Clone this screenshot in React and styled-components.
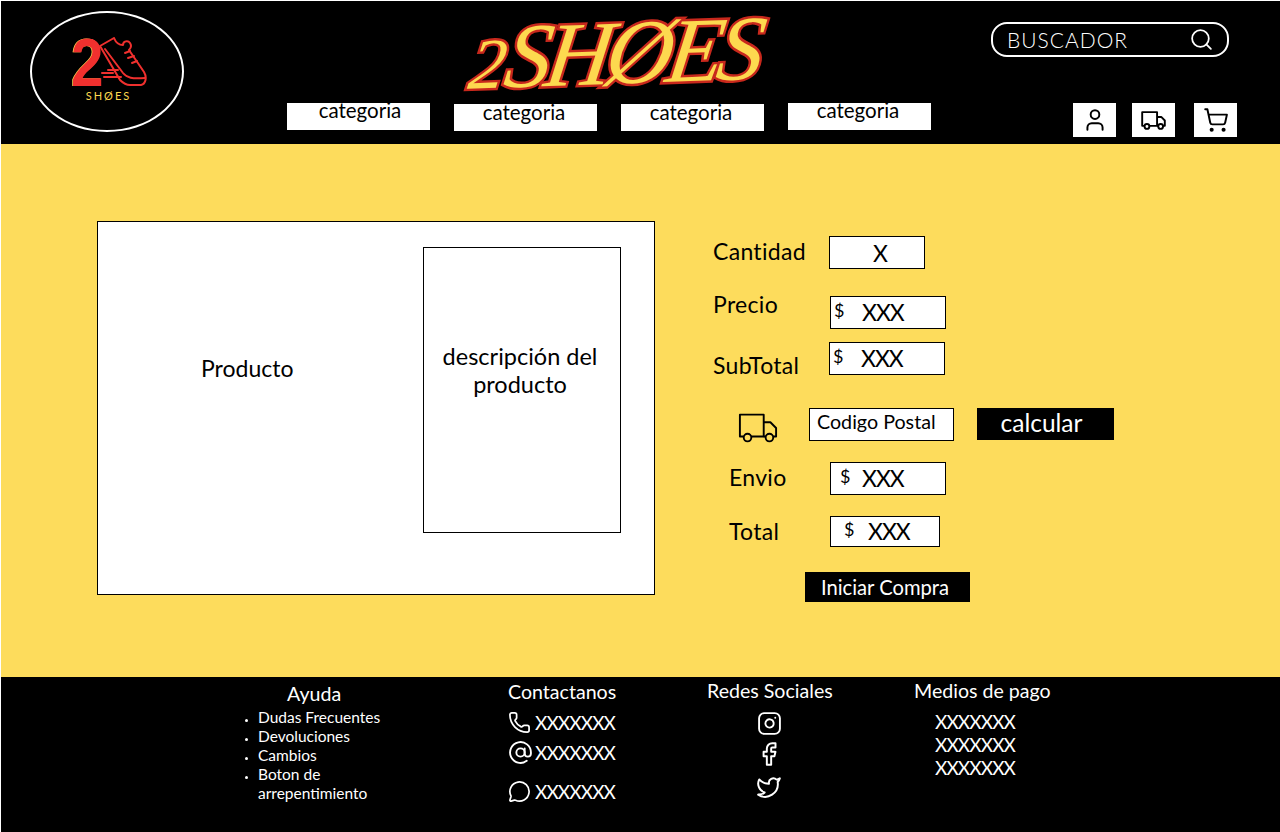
import React from "react";
import styled, { createGlobalStyle } from "styled-components";
import {
  AtSign,
  Facebook,
  Instagram,
  MessageCircle,
  Phone,
  Search,
  ShoppingCart,
  Twitter,
  User,
} from "lucide-react";

const GlobalStyle = createGlobalStyle`
  html, body {
    margin: 0;
    background: #fff;
  }
  body {
    font-family: "Lato", "Noto Sans", sans-serif;
    color: #000;
  }
  * {
    box-sizing: border-box;
  }
`;

const Page = styled.div`
  width: 1280px;
  height: 832px;
  padding: 1px 0 0 1px;
  display: flex;
  flex-direction: column;
  overflow: hidden;
`;

/* header */
const Header = styled.header`
  height: 143px;
  background: #000;
  display: flex;
  flex-shrink: 0;
`;

const LogoBadge = styled.div`
  width: 154px;
  height: 121px;
  margin: 10px 0 0 29px;
  border: 2px solid #fff;
  border-radius: 50%;
  display: flex;
  flex-direction: column;
  align-items: center;
  padding: 24px 0 0 3px;
`;

const LogoMark = styled.div`
  display: flex;
  align-items: flex-end;
  height: 50px;
`;

const LogoTwo = styled.span`
  font-family: "Liberation Sans", sans-serif;
  font-weight: 700;
  font-size: 68px;
  line-height: 50px;
  width: 28px;
  color: #f0302e;
  text-shadow: -1px 0 0 #fdd94f;
  transform: scaleX(0.86);
  transform-origin: left bottom;
`;

const LogoWord = styled.span`
  font-family: "Lato", sans-serif;
  font-weight: 400;
  font-size: 11px;
  line-height: 12px;
  letter-spacing: 2px;
  margin-top: 3px;
  color: #fdd94f;
`;

const CenterColumn = styled.div`
  width: 644px;
  margin-left: 103px;
  display: flex;
  flex-direction: column;
`;

const Wordmark = styled.h1`
  margin: 0;
  height: 102px;
  padding: 3px 0 0 185px;
  font-family: "Liberation Serif", serif;
  font-style: italic;
  font-weight: 400;
  font-size: 92px;
  line-height: 99px;
  letter-spacing: -6px;
  white-space: nowrap;
  color: #fdd94f;
  -webkit-text-stroke: 5px #c8281c;
  paint-order: stroke fill;
  transform: skewX(-10deg) rotate(-2deg);
`;

const WordmarkTwo = styled.span`
  font-size: 72px;
  letter-spacing: -1px;
`;

const CategoryNav = styled.nav`
  display: flex;
  gap: 24px;
`;

const CategoryLink = styled.a`
  width: 143px;
  height: 27px;
  margin-top: ${(p) => p.$top}px;
  padding: ${(p) => p.$top}px ${(p) => (p.$shift < 0 ? 3 : 0)}px 0 ${(p) => (p.$shift > 0 ? 3 : 0)}px;
  background: #fff;
  color: #000;
  font-size: 20.5px;
  line-height: 15px;
  text-align: center;
`;

const RightColumn = styled.div`
  margin-left: 60px;
  display: flex;
  flex-direction: column;
`;

const SearchBox = styled.div`
  width: 238px;
  height: 35px;
  margin-top: 21px;
  padding: 0 13px 0 14px;
  border: 2px solid #fff;
  border-radius: 16px;
  display: flex;
  align-items: center;
  justify-content: space-between;
  color: #fff;
`;

const SearchText = styled.span`
  font-family: "Lato", sans-serif;
  font-weight: 300;
  font-size: 21px;
  letter-spacing: 1px;
`;

const IconBar = styled.div`
  display: flex;
  margin: 46px 0 0 82px;
`;

const IconButton = styled.button`
  width: 43px;
  height: 34px;
  margin-right: ${(p) => p.$gap}px;
  padding: 0;
  border: 0;
  background: #fff;
  color: #000;
  display: flex;
  align-items: center;
  justify-content: center;
`;

/* main */
const Main = styled.main`
  flex: 1;
  background: #fddc5c;
  display: flex;
  padding: 77px 0 0 96px;
`;

const ProductPanel = styled.section`
  width: 558px;
  height: 374px;
  border: 1px solid #000;
  background: #fff;
  display: flex;
  padding: 25px 0 0 0;
`;

const ProductName = styled.div`
  width: 325px;
  height: 135px;
  padding-left: 103px;
  display: flex;
  align-items: flex-end;
  font-size: 23px;
  line-height: 28px;
`;

const DescriptionBox = styled.div`
  width: 198px;
  height: 286px;
  border: 1px solid #000;
  padding: 94px 4px 0 0;
  text-align: center;
  font-size: 23.5px;
  line-height: 28px;
  white-space: nowrap;
`;

const Form = styled.section`
  margin: 15px 0 0 58px;
  display: flex;
  flex-direction: column;
`;

const Row = styled.div`
  display: flex;
  margin-top: ${(p) => p.$top || 0}px;
  padding-left: ${(p) => p.$indent || 0}px;
`;

const Label = styled.span`
  width: ${(p) => p.$width}px;
  height: 28px;
  margin-top: ${(p) => p.$top || 0}px;
  font-size: 23px;
  line-height: 28px;
  letter-spacing: 0.3px;
`;

const ValueBox = styled.div`
  width: ${(p) => p.$width}px;
  height: ${(p) => p.$height || 33}px;
  border: 1px solid #000;
  background: #fff;
  display: flex;
  align-items: center;
  justify-content: ${(p) => (p.$center ? "center" : "flex-start")};
  padding: 0 0 ${(p) => (p.$center ? 0 : 2)}px ${(p) => (p.$center ? 6 : p.$pad)}px;
  font-size: 23px;
  letter-spacing: -1px;
`;

const Currency = styled.span`
  width: ${(p) => p.$width}px;
  font-size: 18px;
  margin-top: -4px;
`;

const FormTruck = styled.svg`
  margin-top: 4px;
`;

const PostalBox = styled.div`
  width: 145px;
  height: 33px;
  margin-left: 31px;
  padding: 0 0 7px 7px;
  border: 1px solid #000;
  background: #fff;
  display: flex;
  align-items: center;
  font-size: 19.7px;
`;

const CalcButton = styled.button`
  width: 137px;
  height: 32px;
  margin-left: 23px;
  padding: 0 8px 10px 0;
  border: 0;
  background: #000;
  color: #fff;
  font-family: inherit;
  font-size: 24.5px;
  text-align: center;
`;

const BuyButton = styled.button`
  width: 165px;
  height: 30px;
  margin: 25px 0 0 92px;
  padding: 0 5px 0 0;
  border: 0;
  background: #000;
  color: #fff;
  font-family: inherit;
  font-size: 20.2px;
`;

/* footer */
const Footer = styled.footer`
  flex: 0 0 155px;
  background: #000;
  color: #fff;
  display: flex;
  padding-left: 241px;
`;

const FooterColumn = styled.div`
  width: ${(p) => p.$width}px;
  padding-top: ${(p) => p.$top}px;
`;

const FooterTitle = styled.h3`
  margin: 0;
  padding-left: ${(p) => p.$indent || 0}px;
  font-weight: 400;
  font-size: 19.6px;
  line-height: 24px;
  white-space: nowrap;
`;

const HelpList = styled.ul`
  margin: 2px 0 0;
  padding: 0 0 0 16px;
  width: 150px;
  font-size: 15.5px;
  line-height: 19px;

  li::marker {
    font-size: 10px;
  }
`;

const ContactRow = styled.div`
  display: flex;
  align-items: center;
  height: 24px;
  gap: ${(p) => p.$gap || 4}px;
  margin-top: ${(p) => p.$top}px;
  font-size: 19px;
  letter-spacing: -0.9px;
`;

const SocialStack = styled.div`
  display: flex;
  flex-direction: column;
  align-items: center;
  width: 124px;
  gap: 5px;
  margin-top: 8px;

  svg:last-child {
    margin-top: 2px;
  }
`;

const PayStack = styled.div`
  margin: 7px 0 0 21px;
  font-size: 19px;
  line-height: 23px;
  letter-spacing: -0.9px;
`;

function ShoeMark() {
  return (
    <svg width="48" height="50" viewBox="0 0 48 50" fill="none" stroke="#f0302e" strokeWidth="2" strokeLinejoin="round" strokeLinecap="round">
      <path d="M1 9 L15 1 C17 6 20 8 24 8 C24 4 29 3 31 6 C33 9 31 12 30 13 L45 35 C48 40 47 47 42 48 L31 48 C27 48 24 46 21 43 L1 9 Z" />
      <path d="M6 12 L24 36 C28 41 33 42 46 41" />
      <path d="M26 16 L31 14 M29 21 L35 19 M33 26 L38 24" />
      <path d="M9 33 L19 33 M3 36 L14 36 M5 40 L22 40" />
    </svg>
  );
}

const truckPaths = (
  <>
    <path d="M6 25 H2 V2 H27 V25 H14" />
    <path d="M27 10 H34 L40 16 V25 H37 M29 25 H27" />
    <circle cx="10" cy="26" r="4" />
    <circle cx="33" cy="26" r="4" />
  </>
);

function Price({ width, height, pad = 3, cur = 28, children }) {
  return (
    <ValueBox $width={width} $height={height} $pad={pad}>
      <Currency $width={cur}>$</Currency>
      {children}
    </ValueBox>
  );
}

export default function App() {
  return (
    <Page>
      <GlobalStyle />
      <Header>
        <LogoBadge>
          <LogoMark>
            <LogoTwo>2</LogoTwo>
            <ShoeMark />
          </LogoMark>
          <LogoWord>SHØES</LogoWord>
        </LogoBadge>
        <CenterColumn>
          <Wordmark>
            <WordmarkTwo>2</WordmarkTwo>SHØES
          </Wordmark>
          <CategoryNav>
            <CategoryLink $top={0} $shift={1}>categoria</CategoryLink>
            <CategoryLink $top={1} $shift={-1}>categoria</CategoryLink>
            <CategoryLink $top={1} $shift={-1}>categoria</CategoryLink>
            <CategoryLink $top={0} $shift={-1}>categoria</CategoryLink>
          </CategoryNav>
        </CenterColumn>
        <RightColumn>
          <SearchBox>
            <SearchText>BUSCADOR</SearchText>
            <Search size={25} strokeWidth={1.7} />
          </SearchBox>
          <IconBar>
            <IconButton $gap={16}>
              <User size={26} strokeWidth={1.8} />
            </IconButton>
            <IconButton $gap={19}>
              <svg width="25" height="21" viewBox="0 0 42 32" fill="none" stroke="currentColor" strokeWidth="3.2" strokeLinejoin="round">
                {truckPaths}
              </svg>
            </IconButton>
            <IconButton $gap={0}>
              <ShoppingCart size={26} strokeWidth={1.8} />
            </IconButton>
          </IconBar>
        </RightColumn>
      </Header>

      <Main>
        <ProductPanel>
          <ProductName>Producto</ProductName>
          <DescriptionBox>
            descripción del
            <br />
            producto
          </DescriptionBox>
        </ProductPanel>
        <Form>
          <Row>
            <Label $width={116} $top={1}>Cantidad</Label>
            <ValueBox $width={96} $center>X</ValueBox>
          </Row>
          <Row $top={27}>
            <Label $width={117} $top={-6}>Precio</Label>
            <Price width={116}>XXX</Price>
          </Row>
          <Row $top={13}>
            <Label $width={116} $top={9}>SubTotal</Label>
            <Price width={116}>XXX</Price>
          </Row>
          <Row $top={29} $indent={25}>
            <FormTruck width="40" height="32" viewBox="0 0 42 32" fill="none" stroke="currentColor" strokeWidth="2" strokeLinejoin="round">
              {truckPaths}
            </FormTruck>
            <PostalBox>Codigo Postal</PostalBox>
            <CalcButton>calcular</CalcButton>
          </Row>
          <Row $top={18} $indent={16}>
            <Label $width={101} $top={1}>Envio</Label>
            <Price width={116} pad={9} cur={22}>XXX</Price>
          </Row>
          <Row $top={21} $indent={16}>
            <Label $width={101} $top={1}>Total</Label>
            <Price width={110} height={31} pad={13} cur={24}>XXX</Price>
          </Row>
          <BuyButton>Iniciar Compra</BuyButton>
        </Form>
      </Main>

      <Footer>
        <FooterColumn $width={266} $top={5}>
          <FooterTitle $indent={45}>Ayuda</FooterTitle>
          <HelpList>
            <li>Dudas Frecuentes</li>
            <li>Devoluciones</li>
            <li>Cambios</li>
            <li>Boton de arrepentimiento</li>
          </HelpList>
        </FooterColumn>
        <FooterColumn $width={199} $top={3}>
          <FooterTitle>Contactanos</FooterTitle>
          <ContactRow $top={6}>
            <Phone size={23} strokeWidth={1.8} />
            XXXXXXX
          </ContactRow>
          <ContactRow $top={6} $gap={2}>
            <AtSign size={25} strokeWidth={1.8} />
            XXXXXXX
          </ContactRow>
          <ContactRow $top={15}>
            <MessageCircle size={23} strokeWidth={1.8} />
            XXXXXXX
          </ContactRow>
        </FooterColumn>
        <FooterColumn $width={207} $top={2}>
          <FooterTitle>Redes Sociales</FooterTitle>
          <SocialStack>
            <Instagram size={25} strokeWidth={1.8} />
            <Facebook size={26} strokeWidth={1.8} />
            <Twitter size={26} strokeWidth={1.8} />
          </SocialStack>
        </FooterColumn>
        <FooterColumn $width={200} $top={2}>
          <FooterTitle>Medios de pago</FooterTitle>
          <PayStack>
            <div>XXXXXXX</div>
            <div>XXXXXXX</div>
            <div>XXXXXXX</div>
          </PayStack>
        </FooterColumn>
      </Footer>
    </Page>
  );
}
